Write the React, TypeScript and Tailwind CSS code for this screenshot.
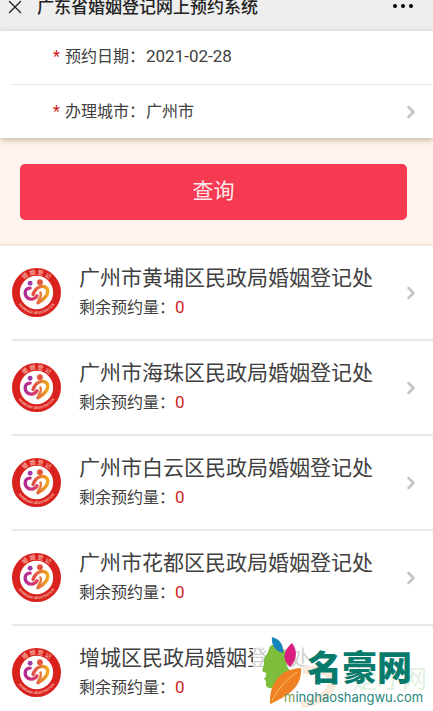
import { ChevronRight, X } from "lucide-react";

const offices = [
  { name: "广州市黄埔区民政局婚姻登记处", remaining: 0 },
  { name: "广州市海珠区民政局婚姻登记处", remaining: 0 },
  { name: "广州市白云区民政局婚姻登记处", remaining: 0 },
  { name: "广州市花都区民政局婚姻登记处", remaining: 0 },
  { name: "增城区民政局婚姻登记处", remaining: 0 },
];

function Emblem({ id }: { id: string }) {
  return (
    <svg viewBox="0 0 100 100" className="size-[49px] shrink-0" aria-hidden="true">
      <defs>
        <linearGradient id={`${id}-left`} x1="0" x2="1" y1="0" y2="0">
          <stop offset="0" stopColor="#b02a98" />
          <stop offset="1" stopColor="#e0405a" />
        </linearGradient>
        <linearGradient id={`${id}-right`} x1="0" x2="1" y1="0" y2="0">
          <stop offset="0" stopColor="#df4a4a" />
          <stop offset="1" stopColor="#f0a81e" />
        </linearGradient>
        <path id={`${id}-top`} d="M13 50a37 37 0 0 1 74 0" />
        <path id={`${id}-bottom`} d="M6 50a44 44 0 0 0 88 0" />
      </defs>
      <circle cx="50" cy="50" r="50" fill="#d9221d" />
      <circle cx="50" cy="50" r="34" fill="#fff" />
      <text fontSize="12" fontWeight="500" fill="#f7b5a8" textAnchor="middle">
        <textPath href={`#${id}-top`} startOffset="50%">婚 姻 登 记</textPath>
      </text>
      <text fontSize="7" fontWeight="700" fill="#f7b5a8" textAnchor="middle">
        <textPath href={`#${id}-bottom`} startOffset="50%">MARRIAGE REGISTRATION</textPath>
      </text>
      <circle cx="37" cy="31" r="5" fill="#a03aa8" />
      <circle cx="57" cy="29" r="6" fill="#e2553c" />
      <g fill="none" strokeLinecap="round" strokeLinejoin="round">
        <path d="M37 41c-7 0-11 5-10 12 1 8 9 12 16 10 4-1 6-3 8-6" stroke={`url(#${id}-left)`} strokeWidth="7" />
        <path d="M43 54c3-8 8-14 15-16 8-2 15 2 15 9 0 11-9 18-20 24" stroke={`url(#${id}-right)`} strokeWidth="7" />
        <path d="M58 50c2 5 1 10-4 16" stroke="#e6763a" strokeWidth="5" />
      </g>
    </svg>
  );
}

function Watermark() {
  return (
    <div className="pointer-events-none absolute right-0 bottom-0 h-[74px] w-[180px] bg-white/75">
      <svg viewBox="0 0 180 74" className="size-full" role="img" aria-label="名豪网">
        <path d="M50 33h14c12 0 18 8 14 17-4 10-18 16-30 17" fill="none" stroke="#fbe9dc" strokeWidth="8" />
        <text x="99" y="51" fontSize="25" fill="#e3f1e0">楚才网</text>
        <path d="M19 8c-4 2-3 6-5 9-3 3-4 6-3 10l-2 7 4 2 0 3-2 3 2 2c0 2-1 4 1 6 2 2 5 1 8 2l-5 10c4-12 11-21 21-28-5-3-5-9-4-15-1-6-6-10-15-11z" fill="#7dbf3d" />
        <path d="M19 0c7 2 12 7 11 16-8-2-12-8-11-16z" fill="#1684bd" />
        <path d="M39 6c6 8 5 17-2 24-9-8-6-17 2-24z" fill="#d9207f" />
        <path d="M48 31c1 17-9 26-31 36-1-21 10-35 31-36z" fill="#ef8122" />
        <path d="M44 35C32 44 24 53 19 64" fill="none" stroke="#fbbf62" strokeWidth="1" />
        <text x="54" y="44" fontSize="35" fontWeight="900" fill="#087b6d">名豪网</text>
        <text x="31" y="65" fontSize="13" fill="#26877d" className="font-['Inter',sans-serif]">
          <tspan fill="#7d9a3f">m</tspan>inghaoshangwu.com
        </text>
      </svg>
    </div>
  );
}

export default function App() {
  return (
    <div className="relative h-screen overflow-hidden bg-[#fff4ed] font-['Roboto','Noto_Sans_CJK_SC',sans-serif] text-[#404040]">
      <header className="flex h-[31px] items-start justify-between bg-[#eeeeee] pr-5 pl-1 text-[#222222]">
        <div className="flex h-[14px] items-center gap-[11px]">
          <button type="button" aria-label="关闭">
            <X className="size-[22px]" strokeWidth={1.5} />
          </button>
          <h1 className="text-[17px] leading-[14px] font-medium">广东省婚姻登记网上预约系统</h1>
        </div>
        <button type="button" aria-label="更多" className="flex h-3 items-center gap-1">
          <span className="size-1 rounded-full bg-black" />
          <span className="size-1 rounded-full bg-black" />
          <span className="size-1 rounded-full bg-black" />
        </button>
      </header>

      <section className="bg-white pl-3 text-base shadow-[0_2px_6px_rgba(90,70,20,0.35)]">
        <div className="flex h-[54px] items-center border-b border-[#e6e6e6] pb-0.5 pl-[41px]">
          <span className="w-3 text-[#d02020]">*</span>
          <span className="w-[81px]">预约日期：</span>
          <span className="text-[17px]">2021-02-28</span>
        </div>
        <button type="button" className="flex h-[53px] w-full items-center pr-3 pl-[41px] text-left">
          <span className="w-3 text-[#d02020]">*</span>
          <span className="w-[81px]">办理城市：</span>
          <span className="flex-1">广州市</span>
          <ChevronRight className="size-5 text-[#c4c4c4]" strokeWidth={3} />
        </button>
      </section>

      <div className="pt-[26px] pr-[26px] pb-[26px] pl-5">
        <button type="button" className="h-14 w-full rounded-[5px] bg-[#f63a52] text-[21px] text-[#ffe9ec]">
          查询
        </button>
      </div>

      <ul className="bg-white shadow-[0_-1px_3px_rgba(90,70,20,0.15)]">
        {offices.map((office, i) => (
          <li key={office.name} className="pl-3">
            <a href="#" className="flex h-[95px] items-center border-b-2 border-[#e8e8e8] pr-3">
              <Emblem id={`emblem-${i}`} />
              <div className="ml-[18px] flex-1">
                <div className="text-[21px] leading-[30px]">{office.name}</div>
                <div className="text-base leading-7">
                  剩余预约量：<span className="text-[17px] text-[#d02525]">{office.remaining}</span>
                </div>
              </div>
              <ChevronRight className="size-5 text-[#c4c4c4]" strokeWidth={3} />
            </a>
          </li>
        ))}
      </ul>

      <Watermark />
    </div>
  );
}
